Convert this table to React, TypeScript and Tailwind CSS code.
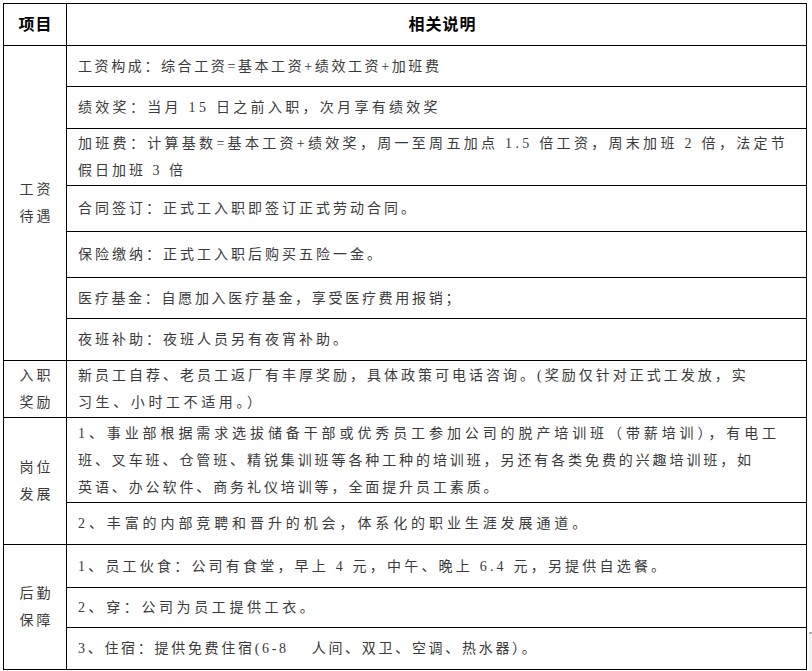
import React from "react";

const font = { fontFamily: '"Liberation Serif", "Noto Sans CJK SC", serif' };

const rightCell =
  "bg-white col-start-2 flex items-center pl-[11px] text-[14px] leading-[27px] text-[#3a3a3a] whitespace-pre";
const leftCell =
  "bg-white col-start-1 flex flex-col items-center justify-center pl-[3px] text-[14px] leading-[27px] tracking-[3px] text-[#3a3a3a] text-center";

type Line = { t: string; c: string };

function Right({ lines }: { lines: Line[] }) {
  return (
    <div className={rightCell}>
      <div>
        {lines.map((l, i) => (
          <div key={i} className={l.c}>
            {l.t}
          </div>
        ))}
      </div>
    </div>
  );
}

export default function App() {
  return (
    <div className="relative w-[812px] h-[671px] bg-white pt-[3px] pl-[3px]" style={font}>
      <div className="grid w-fit grid-cols-[62px_739px] grid-rows-[41px_40px_41px_56px_45px_45px_40px_41px_56px_84px_41px_42px_39px_41px] gap-px bg-black p-px">
        <div className="bg-white col-start-1 row-start-1 flex items-center justify-center pl-[1px] text-[16px] font-bold tracking-[1px] text-black">
          项目
        </div>
        <div className="bg-white col-start-2 row-start-1 flex items-center justify-center pl-[12px] text-[16px] font-bold tracking-[1px] text-black">
          相关说明
        </div>

        <div className={leftCell + " row-start-2 row-span-7"}>
          <div>工资</div>
          <div>待遇</div>
        </div>
        <Right lines={[{ t: "工资构成：综合工资=基本工资+绩效工资+加班费", c: "tracking-[2.6px]" }]} />
        <Right lines={[{ t: "绩效奖：当月 15 日之前入职，次月享有绩效奖", c: "tracking-[3.3px]" }]} />
        <Right
          lines={[
            { t: "加班费：计算基数=基本工资+绩效奖，周一至周五加点 1.5 倍工资，周末加班 2 倍，法定节", c: "tracking-[3.3px]" },
            { t: "假日加班 3 倍", c: "tracking-[3px]" },
          ]}
        />
        <Right lines={[{ t: "合同签订：正式工入职即签订正式劳动合同。", c: "tracking-[3px]" }]} />
        <Right lines={[{ t: "保险缴纳：正式工入职后购买五险一金。", c: "tracking-[3px]" }]} />
        <Right lines={[{ t: "医疗基金：自愿加入医疗基金，享受医疗费用报销；", c: "tracking-[2.7px]" }]} />
        <Right lines={[{ t: "夜班补助：夜班人员另有夜宵补助。", c: "tracking-[3px]" }]} />

        <div className={leftCell + " row-start-9 row-span-1"}>
          <div>入职</div>
          <div>奖励</div>
        </div>
        <Right
          lines={[
            { t: "新员工自荐、老员工返厂有丰厚奖励，具体政策可电话咨询。(奖励仅针对正式工发放，实", c: "tracking-[3px]" },
            { t: "习生、小时工不适用。）", c: "tracking-[3.6px]" },
          ]}
        />

        <div className={leftCell + " row-start-10 row-span-2"}>
          <div>岗位</div>
          <div>发展</div>
        </div>
        <Right
          lines={[
            { t: "1、事业部根据需求选拔储备干部或优秀员工参加公司的脱产培训班（带薪培训），有电工", c: "tracking-[3.9px]" },
            { t: "班、叉车班、仓管班、精锐集训班等各种工种的培训班，另还有各类免费的兴趣培训班，如", c: "tracking-[2.9px]" },
            { t: "英语、办公软件、商务礼仪培训等，全面提升员工素质。", c: "tracking-[2.9px]" },
          ]}
        />
        <Right lines={[{ t: "2、丰富的内部竞聘和晋升的机会，体系化的职业生涯发展通道。", c: "tracking-[3.9px]" }]} />

        <div className={leftCell + " row-start-12 row-span-3"}>
          <div>后勤</div>
          <div>保障</div>
        </div>
        <Right lines={[{ t: "1、员工伙食：公司有食堂，早上 4 元，中午、晚上 6.4 元，另提供自选餐。", c: "tracking-[3.2px]" }]} />
        <Right lines={[{ t: "2、穿：公司为员工提供工衣。", c: "tracking-[3.6px]" }]} />
        <Right lines={[{ t: "3、住宿：提供免费住宿(6-8\u3000\u00a0人间、双卫、空调、热水器）。", c: "tracking-[2.7px]" }]} />
      </div>

      <div className="absolute left-[809px] top-[632px] w-[3px] h-[2px] bg-[#b4b4b4]" />
      <div className="absolute left-[809px] top-[634px] w-[3px] h-[37px] bg-[#f2f2f2]" />
    </div>
  );
}
